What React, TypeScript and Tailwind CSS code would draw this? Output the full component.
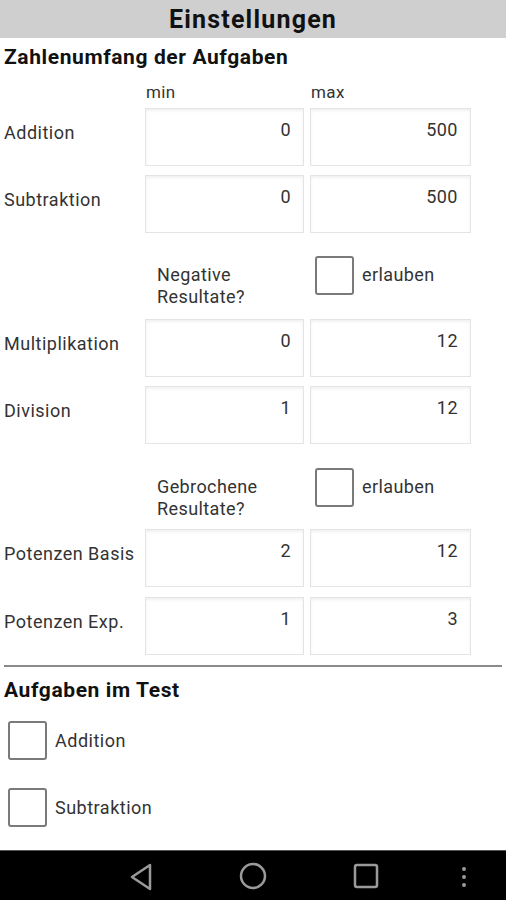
import React from 'react';

const font = { fontFamily: 'Roboto, "Noto Sans", sans-serif' };

const RangeRow = ({ label, min, max }: { label: string; min: string; max: string }) => (
  <div className="flex h-[58px]">
    <div className="w-[145px] pl-1 pt-[13px] text-[18px] tracking-[0.5px] text-[#333] leading-[24px] whitespace-nowrap">{label}</div>
    <div className="w-[159px] h-[58px] bg-white border border-[#e4e4e4] shadow-[inset_0_2px_3px_rgba(0,0,0,0.06)] text-right pr-3 pt-[10px] text-[18px] tracking-[0.5px] text-[#333] leading-[22px]">
      {min}
    </div>
    <div className="ml-[6px] w-[161px] h-[58px] bg-white border border-[#e4e4e4] shadow-[inset_0_2px_3px_rgba(0,0,0,0.06)] text-right pr-3 pt-[10px] text-[18px] tracking-[0.5px] text-[#333] leading-[22px]">
      {max}
    </div>
  </div>
);

const Box = () => (
  <div className="w-[39px] h-[39px] border-2 border-[#7a7a7a] rounded-[3px] bg-white" />
);

const AllowRow = ({ line1, line2 }: { line1: string; line2: string }) => (
  <div className="flex h-[63px]">
    <div className="w-[145px]" />
    <div className="w-[159px] pl-3 pt-[8px] text-[18px] tracking-[0.4px] text-[#333] leading-[22px]">
      {line1}
      <br />
      {line2}
    </div>
    <div className="ml-[11px] flex items-start gap-2">
      <Box />
      <span className="text-[18px] tracking-[0.4px] text-[#333] leading-[22px] pt-[8px]">erlauben</span>
    </div>
  </div>
);

const App = () => {
  return (
    <div className="w-[506px] h-[900px] bg-white flex flex-col overflow-hidden" style={font}>
      <div className="h-[38px] bg-[#cfcfcf] flex items-center justify-center">
        <h1 className="text-[25px] font-bold tracking-[1.2px] text-[#111] leading-none">Einstellungen</h1>
      </div>

      <div className="flex-1">
        <h2 className="pl-1 pt-[6px] text-[21px] font-bold tracking-[0.6px] text-[#111] leading-[26px] whitespace-nowrap">Zahlenumfang der Aufgaben</h2>

        <div className="flex h-[38px] pt-[12px] text-[17px] tracking-[0.4px] leading-[20px] text-[#333]">
          <div className="w-[145px]" />
          <div className="w-[165px] pl-[1px]">min</div>
          <div className="pl-[1px]">max</div>
        </div>

        <div className="flex flex-col gap-[9px]">
          <RangeRow label="Addition" min="0" max="500" />
          <RangeRow label="Subtraktion" min="0" max="500" />
        </div>

        <div className="mt-[23px]">
          <AllowRow line1="Negative" line2="Resultate?" />
        </div>

        <div className="flex flex-col gap-[9px]">
          <RangeRow label="Multiplikation" min="0" max="12" />
          <RangeRow label="Division" min="1" max="12" />
        </div>

        <div className="mt-[24px]">
          <AllowRow line1="Gebrochene" line2="Resultate?" />
        </div>

        <div className="mt-[-2px] flex flex-col gap-[10px]">
          <RangeRow label="Potenzen Basis" min="2" max="12" />
          <RangeRow label="Potenzen Exp." min="1" max="3" />
        </div>

        <div className="mx-1 mt-[10px] h-[2px] bg-[#8a8a8a]" />

        <h2 className="pl-1 pt-[10px] text-[21px] font-bold tracking-[0.6px] text-[#111] leading-[26px]">Aufgaben im Test</h2>

        <div className="mt-[18px] flex flex-col gap-[28px] pl-2">
          <div className="flex items-center gap-2">
            <Box />
            <span className="text-[18px] tracking-[0.5px] text-[#333]">Addition</span>
          </div>
          <div className="flex items-center gap-2">
            <Box />
            <span className="text-[18px] tracking-[0.5px] text-[#333]">Subtraktion</span>
          </div>
        </div>
      </div>

      <div className="h-[50px] bg-black border-t border-[#555] relative">
        <svg className="absolute left-[128px] top-[12px]" width="28" height="28" viewBox="0 0 28 28">
          <path d="M22 2 L22 26 L4 14 Z" fill="none" stroke="#9a9a9a" strokeWidth="2.5" strokeLinejoin="round" />
        </svg>
        <svg className="absolute left-[239px] top-[11px]" width="28" height="28" viewBox="0 0 28 28">
          <circle cx="14" cy="14" r="12" fill="none" stroke="#9a9a9a" strokeWidth="2.5" />
        </svg>
        <svg className="absolute left-[353px] top-[12px]" width="26" height="26" viewBox="0 0 26 26">
          <rect x="2" y="2" width="22" height="22" rx="2" fill="none" stroke="#9a9a9a" strokeWidth="2.5" />
        </svg>
        <svg className="absolute left-[460px] top-[15px]" width="8" height="22" viewBox="0 0 8 22">
          <circle cx="4" cy="3" r="2" fill="#9a9a9a" />
          <circle cx="4" cy="11" r="2" fill="#9a9a9a" />
          <circle cx="4" cy="19" r="2" fill="#9a9a9a" />
        </svg>
      </div>
    </div>
  );
};

export default App;
